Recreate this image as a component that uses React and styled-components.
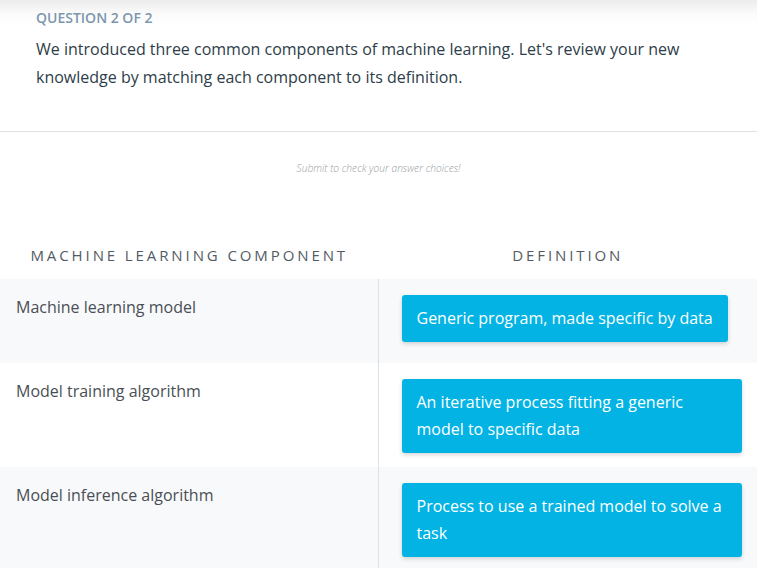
import React from 'react';
import styled, { createGlobalStyle } from 'styled-components';

const GlobalStyle = createGlobalStyle`
  html, body {
    margin: 0;
    padding: 0;
    overflow: hidden;
    background: #fff;
    font-family: "Open Sans", "Noto Sans", Arial, sans-serif;
  }
`;

const Page = styled.div`
  width: 757px;
`;

const Question = styled.section`
  padding: 9px 36px 40px;
  background: linear-gradient(#ececec 0, #fbfbfb 14px, #fff 26px);
  border-bottom: 1px solid #dde1e6;
`;

const Label = styled.div`
  font-size: 14px;
  line-height: 18px;
  font-weight: 600;
  color: #7d96ad;
  text-transform: uppercase;
`;

const Prompt = styled.p`
  margin: 8px 0 0;
  font-size: 16px;
  line-height: 28px;
  color: #2e3d49;
`;

const Hint = styled.div`
  padding-top: 29px;
  text-align: center;
  font-size: 10.2px;
  line-height: 14px;
  font-style: italic;
  font-weight: 300;
  color: #979da3;
`;

const Table = styled.div`
  margin-top: 70px;
`;

const Row = styled.div`
  display: grid;
  grid-template-columns: 1fr 1fr;
  background: ${p => (p.shaded ? '#f8f9fb' : '#fff')};
`;

const HeadCell = styled.div`
  padding-bottom: 14px;
  text-align: center;
  font-size: 15px;
  line-height: 20px;
  font-weight: 500;
  letter-spacing: 2.9px;
  color: #525b64;
  text-transform: uppercase;
`;

const Term = styled.div`
  padding: 16px 16px;
  border-right: 1px solid #dde1e6;
  font-size: 16px;
  line-height: 24px;
  color: #4a4f55;
`;

const Slot = styled.div`
  padding: 16px 15px 14px 23px;
  min-height: 54px;
`;

const Card = styled.div`
  display: inline-block;
  max-width: 310px;
  padding: 10px 15px;
  background: #02b3e4;
  color: #fff;
  font-size: 16px;
  line-height: 27px;
  border-radius: 3px;
  box-shadow: 0 2px 4px rgba(0, 0, 0, 0.16);
`;

const pairs = [
  ['Machine learning model', 'Generic program, made specific by data'],
  ['Model training algorithm', 'An iterative process fitting a generic model to specific data'],
  ['Model inference algorithm', 'Process to use a trained model to solve a task'],
];

export default function App() {
  return (
    <Page>
      <GlobalStyle />
      <Question>
        <Label>Question 2 of 2</Label>
        <Prompt>
          We introduced three common components of machine learning. Let's review your new
          knowledge by matching each component to its definition.
        </Prompt>
      </Question>
      <Hint>Submit to check your answer choices!</Hint>
      <Table>
        <Row>
          <HeadCell>Machine Learning Component</HeadCell>
          <HeadCell>Definition</HeadCell>
        </Row>
        {pairs.map(([term, def], i) => (
          <Row key={term} shaded={i % 2 === 0}>
            <Term>{term}</Term>
            <Slot>
              <Card>{def}</Card>
            </Slot>
          </Row>
        ))}
      </Table>
    </Page>
  );
}
